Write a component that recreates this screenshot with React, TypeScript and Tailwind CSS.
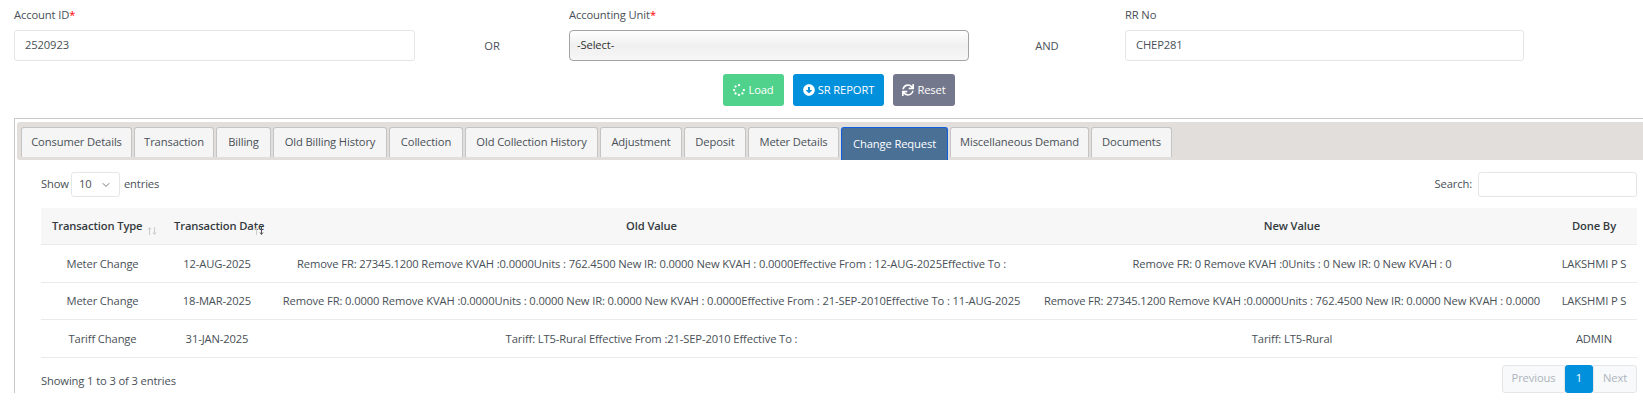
import { ChevronDown } from "lucide-react";
import { FaArrowAltCircleDown, FaSpinner, FaSync } from "react-icons/fa";

const FONT = "[font-family:'Open_Sans','Noto_Sans',sans-serif]";

const TABS = [
  { label: "Consumer Details", width: "w-[111px]" },
  { label: "Transaction", width: "w-[80px]" },
  { label: "Billing", width: "w-[55px]" },
  { label: "Old Billing History", width: "w-[114px]" },
  { label: "Collection", width: "w-[74px]" },
  { label: "Old Collection History", width: "w-[133px]" },
  { label: "Adjustment", width: "w-[82px]" },
  { label: "Deposit", width: "w-[62px]" },
  { label: "Meter Details", width: "w-[91px]" },
  { label: "Change Request", width: "w-[107px]", active: true },
  { label: "Miscellaneous Demand", width: "w-[139px]" },
  { label: "Documents", width: "w-[81px]" },
];

const ROWS = [
  {
    type: "Meter Change",
    date: "12-AUG-2025",
    oldValue: "Remove FR: 27345.1200 Remove KVAH :0.0000Units : 762.4500 New IR: 0.0000 New KVAH : 0.0000Effective From : 12-AUG-2025Effective To :",
    newValue: "Remove FR: 0 Remove KVAH :0Units : 0 New IR: 0 New KVAH : 0",
    doneBy: "LAKSHMI P S",
    height: "h-[38px]",
  },
  {
    type: "Meter Change",
    date: "18-MAR-2025",
    oldValue: "Remove FR: 0.0000 Remove KVAH :0.0000Units : 0.0000 New IR: 0.0000 New KVAH : 0.0000Effective From : 21-SEP-2010Effective To : 11-AUG-2025",
    newValue: "Remove FR: 27345.1200 Remove KVAH :0.0000Units : 762.4500 New IR: 0.0000 New KVAH : 0.0000",
    doneBy: "LAKSHMI P S",
    height: "h-[37px]",
  },
  {
    type: "Tariff Change",
    date: "31-JAN-2025",
    oldValue: "Tariff: LT5-Rural Effective From :21-SEP-2010 Effective To :",
    newValue: "Tariff: LT5-Rural",
    doneBy: "ADMIN",
    height: "h-[38px]",
  },
];

function Field({ label, value, required }: { label: string; value: string; required?: boolean }) {
  return (
    <div>
      <div className="flex h-[30px] items-start pt-[7px] leading-[16px]">
        {label}
        {required && <span className="text-[#f00]">*</span>}
      </div>
      <div className="flex h-[31px] items-center rounded-[3px] border border-[#e4e6e8] bg-white pl-[10px] text-[#495057]">
        {value}
      </div>
    </div>
  );
}

function SortArrows({ activeDown }: { activeDown?: boolean }) {
  return (
    <svg viewBox="0 0 10 8" className="absolute top-[19px] right-0 h-[8px] w-[10px]" fill="none" strokeWidth="1">
      <path d="M2.5 8V1M1 2.5l1.5-2 1.5 2" stroke="#ccc" />
      <path d="M7.5 0v7M6 5.5l1.5 2 1.5-2" stroke={activeDown ? "#555" : "#ccc"} />
    </svg>
  );
}

export default function App() {
  return (
    <div className={`h-[401px] w-[1643px] overflow-hidden bg-white text-[11.2px] tracking-[-0.12px] text-[#495057] ${FONT}`}>
      {/* filters */}
      <div className="grid grid-cols-[401px_154px_400px_156px_399px] pl-[14px]">
        <Field label="Account ID" value="2520923" required />
        <div className="flex items-center justify-center pt-[31px]">OR</div>
        <div>
          <div className="flex h-[30px] items-start pt-[7px] leading-[16px]">
            Accounting Unit<span className="text-[#f00]">*</span>
          </div>
          <div className="flex h-[31px] items-start rounded-[4px] border border-[#a3a3a3] bg-gradient-to-b from-white via-[#f0f0f0] via-50% to-[#f6f6f6] pt-[6px] pl-[7px] leading-[16px] text-[#333]">
            -Select-
          </div>
        </div>
        <div className="flex items-center justify-center pt-[31px]">AND</div>
        <Field label="RR No" value="CHEP281" />
      </div>

      {/* actions */}
      <div className="mt-[13px] flex justify-center gap-[9px] pl-[35px] text-white">
        <button className="flex h-[32px] w-[61px] items-center justify-center gap-[3px] rounded-[3px] bg-[#51d28c]">
          <FaSpinner className="h-[12px] w-[12px]" />
          Load
        </button>
        <button className="flex h-[32px] w-[91px] items-center justify-center gap-[3px] rounded-[3px] bg-[#0090dc]">
          <FaArrowAltCircleDown className="h-[12px] w-[12px]" />
          SR REPORT
        </button>
        <button className="flex h-[32px] w-[62px] items-center justify-center gap-[3px] rounded-[3px] bg-[#74788d]">
          <FaSync className="h-[12px] w-[12px]" />
          Reset
        </button>
      </div>

      {/* panel */}
      <div className="mt-[12px] ml-[14px] border-t border-l border-[#c8c8c8] pt-[3px] pl-[2px]">
        <div className="flex h-[38px] gap-[2px] rounded-l-[3px] bg-[#e2dedc] pt-[5px] pl-[4px]">
          {TABS.map((tab) => (
            <div
              key={tab.label}
              className={
                tab.active
                  ? `flex h-[33px] ${tab.width} items-center justify-center rounded-t-[3px] border border-b-0 border-[#0d5ee0] bg-[#4a7096] text-white`
                  : `flex h-[30px] ${tab.width} items-center justify-center rounded-t-[3px] border border-b-0 border-[#c4c4c4] bg-[#f5f5f5]`
              }
            >
              {tab.label}
            </div>
          ))}
        </div>

        {/* show / search */}
        <div className="mt-[12px] flex h-[25px] items-center pr-[6px] pl-[24px]">
          <span>Show</span>
          <div className="mr-[4px] ml-[2px] flex h-[25px] w-[49px] items-center justify-between rounded-[3px] border border-[#e4e6e8] px-[7px]">
            10
            <ChevronDown className="h-[12px] w-[12px]" strokeWidth={1.5} />
          </div>
          <span>entries</span>
          <span className="mr-[6px] ml-auto">Search:</span>
          <div className="h-[25px] w-[159px] rounded-[3px] border border-[#e4e6e8]" />
        </div>

        {/* table */}
        <div className="mt-[11px] pr-[6px] pl-[24px]">
          <table className="w-[1596px] table-fixed border-collapse text-center">
            <colgroup>
              <col className="w-[123px]" />
              <col className="w-[106px]" />
              <col className="w-[763px]" />
              <col className="w-[518px]" />
              <col className="w-[86px]" />
            </colgroup>
            <thead>
              <tr className="h-[36px] border-b border-[#e9ebec] bg-[#f7f7f7] text-[#343a40]">
                <th className="relative pt-[2px] pl-[11px] text-left font-semibold whitespace-nowrap">
                  Transaction Type
                  <span className="absolute top-0 right-[7px] h-full w-[10px]">
                    <SortArrows />
                  </span>
                </th>
                <th className="relative pt-[2px] pl-[10px] text-left font-semibold whitespace-nowrap">
                  Transaction Date
                  <span className="absolute top-0 right-[6px] h-full w-[10px]">
                    <SortArrows activeDown />
                  </span>
                </th>
                <th className="pt-[2px] font-semibold">Old Value</th>
                <th className="pt-[2px] font-semibold">New Value</th>
                <th className="pt-[2px] font-semibold">Done By</th>
              </tr>
            </thead>
            <tbody>
              {ROWS.map((row) => (
                <tr key={row.date} className={`${row.height} border-b border-[#e9ebec]`}>
                  <td className="pt-[2px]">{row.type}</td>
                  <td className="pt-[2px]">{row.date}</td>
                  <td className="pt-[2px] whitespace-nowrap">{row.oldValue}</td>
                  <td className="pt-[2px] whitespace-nowrap">{row.newValue}</td>
                  <td className="pt-[2px]">{row.doneBy}</td>
                </tr>
              ))}
            </tbody>
          </table>
        </div>

        {/* footer */}
        <div className="mt-[7px] flex h-[28px] items-center justify-between pr-[6px] pl-[24px]">
          <span className="pt-[6px]">Showing 1 to 3 of 3 entries</span>
          <div className="flex h-[28px]">
            <div className="flex w-[63px] items-center justify-center rounded-l-[3px] border border-[#e4e6e8] bg-[#f8f9fa] text-[#adb5bd]">
              Previous
            </div>
            <div className="flex w-[28px] items-center justify-center rounded-[3px] bg-[#0090dc] text-white">1</div>
            <div className="flex w-[44px] items-center justify-center rounded-r-[3px] border border-[#e4e6e8] bg-[#f8f9fa] text-[#adb5bd]">
              Next
            </div>
          </div>
        </div>
      </div>
    </div>
  );
}
